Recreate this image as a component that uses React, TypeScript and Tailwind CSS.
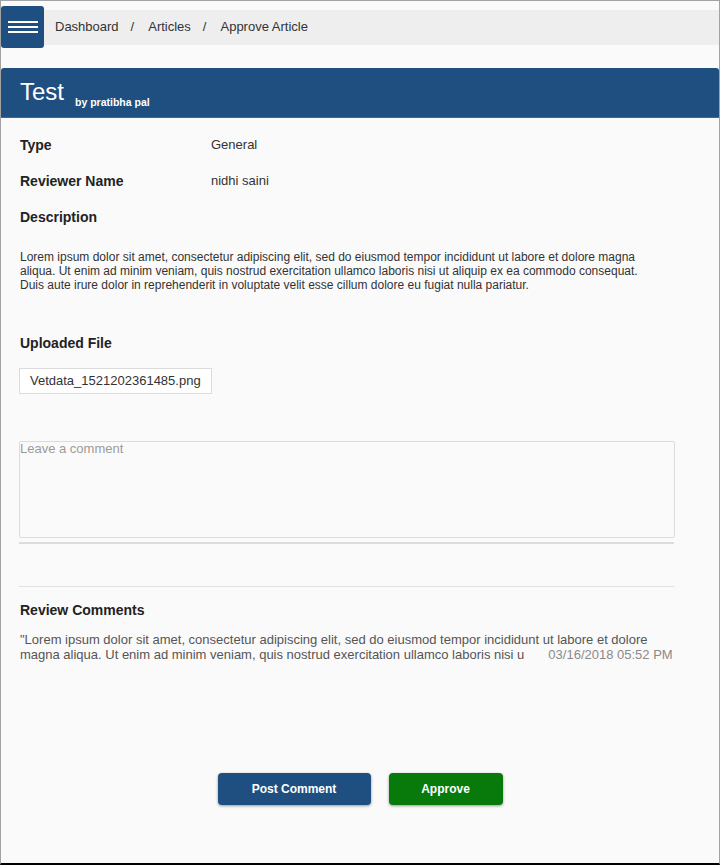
import React from "react";

const lorem =
  "Lorem ipsum dolor sit amet, consectetur adipiscing elit, sed do eiusmod tempor incididunt ut labore et dolore magna aliqua. Ut enim ad minim veniam, quis nostrud exercitation ullamco laboris nisi ut aliquip ex ea commodo consequat. Duis aute irure dolor in reprehenderit in voluptate velit esse cillum dolore eu fugiat nulla pariatur.";

const comment =
  '"Lorem ipsum dolor sit amet, consectetur adipiscing elit, sed do eiusmod tempor incididunt ut labore et dolore magna aliqua. Ut enim ad minim veniam, quis nostrud exercitation ullamco laboris nisi u';

function Row({ label, value }: { label: string; value?: string }) {
  return (
    <div className="flex h-[36px] items-center">
      <div className="w-[191px] text-[14px] font-bold text-[#222]">{label}</div>
      {value && <div className="text-[13px] text-[#333]">{value}</div>}
    </div>
  );
}

export default function App() {
  return (
    <div
      className="w-[720px] h-[865px] bg-[#fafafa] border-t border-l border-r border-[#a3a3a3] border-b-2 border-b-black overflow-hidden"
      style={{ fontFamily: '"Liberation Sans", Arial, sans-serif' }}
    >
      {/* top bar */}
      <div className="flex items-center h-[52px] pt-[5px] pb-[5px]">
        <button className="w-[43px] h-[42px] bg-[#1f4f80] rounded-[3px] flex flex-col items-center justify-center gap-[2.5px] shrink-0">
          <span className="block w-[30px] h-[2.5px] bg-white" />
          <span className="block w-[30px] h-[2.5px] bg-white" />
          <span className="block w-[30px] h-[2.5px] bg-white" />
        </button>
        <div className="flex-1 h-[35px] bg-[#eeeeee] flex items-center pl-[11px] text-[13px] text-[#333]">
          <span>Dashboard</span>
          <span className="ml-[12px] mr-[14px]">/</span>
          <span>Articles</span>
          <span className="ml-[12px] mr-[14px]">/</span>
          <span>Approve Article</span>
        </div>
      </div>

      {/* header */}
      <div className="mt-[15px] h-[50px] bg-[#1f4f80] rounded-t-[3px] flex items-end pl-[19px] pb-[13px] border-b border-[#3b6a98]">
        <span className="text-[24px] leading-none text-white">Test</span>
        <span className="ml-[11px] text-[10.5px] font-bold text-white leading-none mb-[-3px]">
          by pratibha pal
        </span>
      </div>

      {/* content */}
      <div className="pl-[18px] pr-[44px] pt-[9px]">
        <div className="pl-[1px]">
          <Row label="Type" value="General" />
          <Row label="Reviewer Name" value="nidhi saini" />
          <Row label="Description" />
          <p className="mt-[15px] w-[630px] text-[12px] leading-[14px] text-[#333]">{lorem}</p>
          <div className="mt-[41px] h-[20px] flex items-center text-[14px] font-bold text-[#222]">
            Uploaded File
          </div>
        </div>

        <div className="mt-[15px] inline-flex h-[26px] items-center bg-white border border-[#dcdcdc] px-[10px] text-[13px] text-[#333]">
          Vetdata_1521202361485.png
        </div>

        <textarea
          placeholder="Leave a comment"
          className="mt-[47px] block w-[656px] h-[97px] resize-none bg-[#fafafa] border border-[#dcdcdc] rounded-[2px] text-[13px] leading-[14px] text-[#333] placeholder:text-[#9a9a9a] outline-none p-0"
        />
        <div className="mt-[4px] w-[655px] h-[2px] bg-[#dddddd]" />
        <div className="mt-[42px] w-[655px] h-[1px] bg-[#e0e0e0]" />

        <div className="pl-[1px]">
          <div className="mt-[13px] h-[20px] flex items-center text-[14px] font-bold text-[#222]">
            Review Comments
          </div>
          <p className="mt-[12px] w-[656px] text-[13px] leading-[15px] text-[#555]">
            {comment}
            <span className="inline-block ml-[24px] text-[#8a8a8a]">03/16/2018 05:52 PM</span>
          </p>
        </div>
      </div>

      {/* actions */}
      <div className="mt-[111px] flex justify-center gap-[18px]">
        <button className="w-[153px] h-[32px] rounded-[4px] bg-[#1f4f80] text-white text-[12px] font-bold shadow-[0_1px_3px_rgba(0,0,0,0.4)]">
          Post Comment
        </button>
        <button className="w-[114px] h-[32px] rounded-[4px] bg-[#077a0b] text-white text-[12px] font-bold shadow-[0_1px_3px_rgba(0,0,0,0.4)]">
          Approve
        </button>
      </div>
    </div>
  );
}
